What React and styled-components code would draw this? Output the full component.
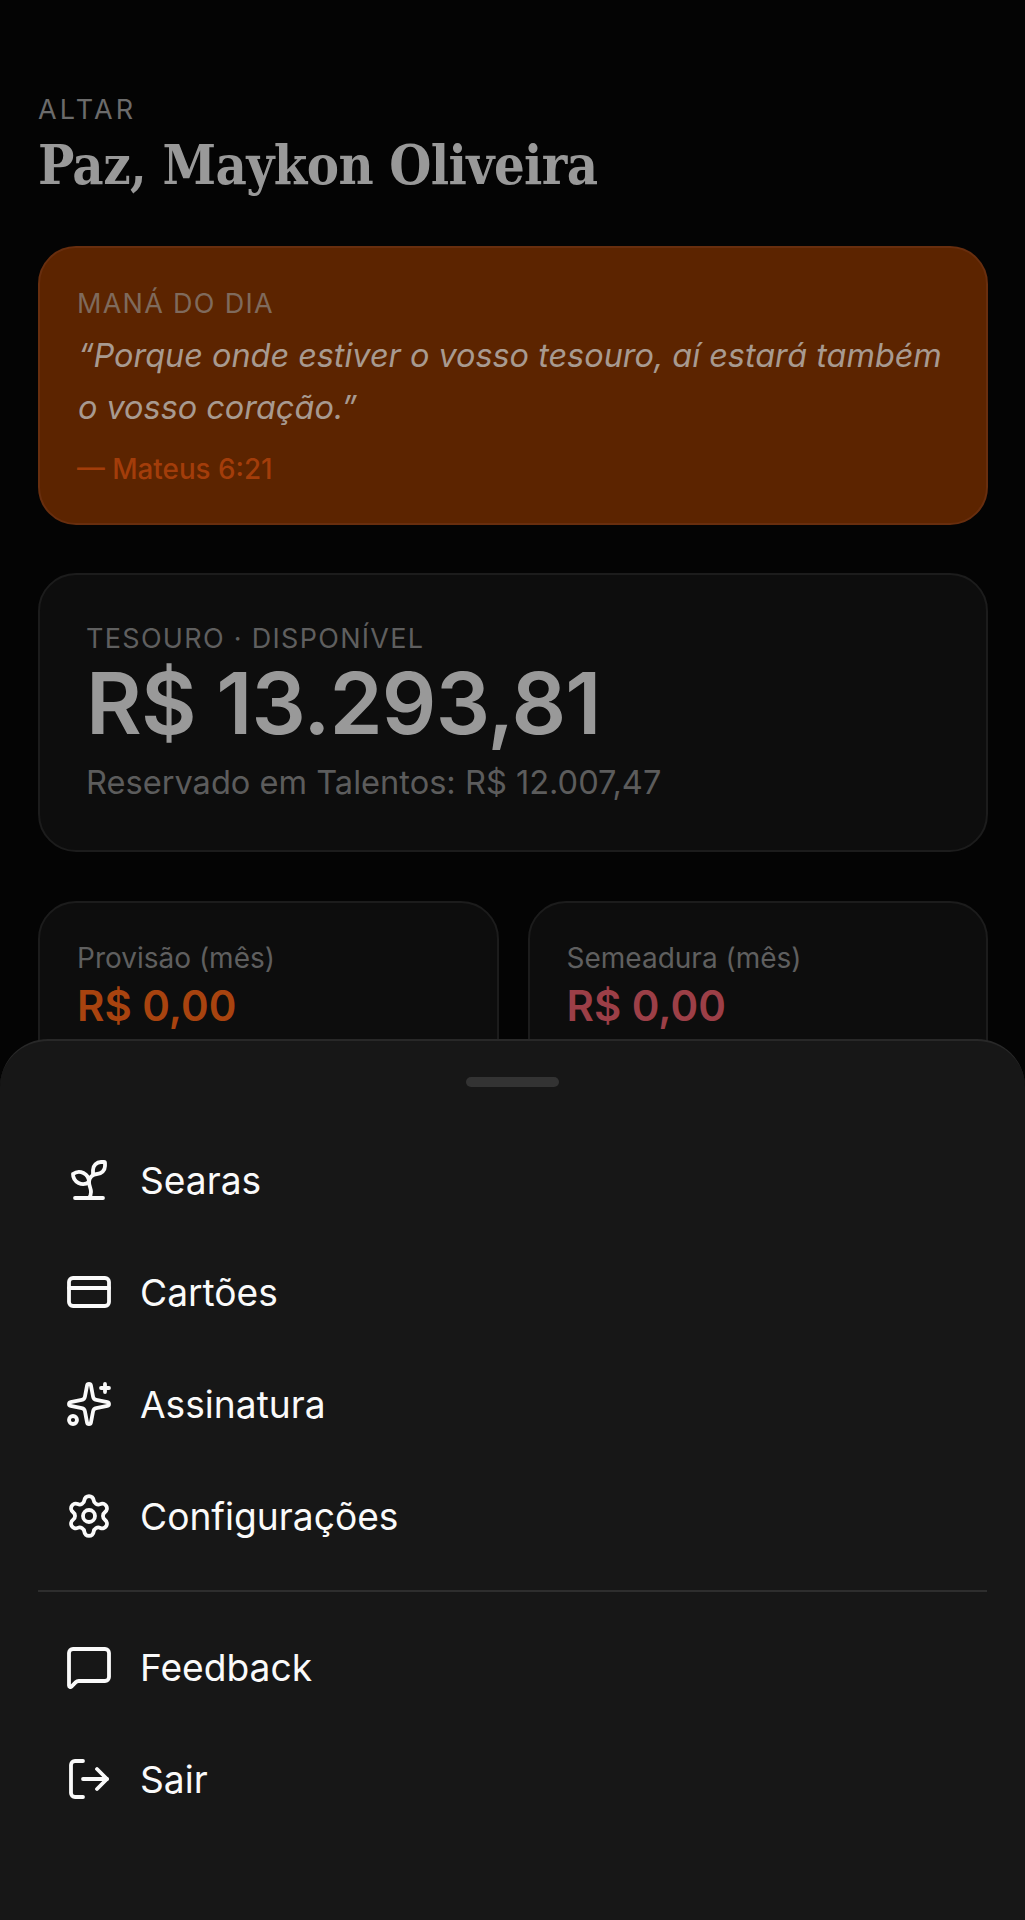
import React from "react";
import styled, { createGlobalStyle } from "styled-components";
import { Sprout, CreditCard, Sparkles, Settings, MessageSquare, LogOut } from "lucide-react";

const Global = createGlobalStyle`
  html, body { margin: 0; padding: 0; background: #050505; }
  body { font-family: Inter, "Noto Sans", sans-serif; }
  * { box-sizing: border-box; }
`;

const Page = styled.div`
  position: relative;
  width: 1025px;
  height: 1920px;
  overflow: hidden;
  background: #040404;
  padding: 94px 37px 0 38px;
`;
const Eyebrow = styled.div`
  font-size: 27px;
  line-height: 32px;
  letter-spacing: 3.2px;
  color: #6b6b6b;
`;
const Title = styled.h1`
  margin: 3px 0 0;
  font-family: "DejaVu Serif Condensed", "DejaVu Serif", serif;
  font-weight: 700;
  font-stretch: condensed;
  font-size: 53.8px;
  line-height: 72px;
  letter-spacing: -0.6px;
  color: #999999;
`;
const Verse = styled.section`
  margin-top: 45px;
  height: 279px;
  padding: 40px 37px 0;
  border-radius: 38px;
  background: #5c2400;
  border: 2px solid #682e0e;
`;
const VerseLabel = styled.div`
  font-size: 27px;
  line-height: 32px;
  letter-spacing: 1.3px;
  color: #7f6a5c;
`;
const Quote = styled.p`
  margin: 10px 0 0 1px;
  font-size: 32.4px;
  line-height: 52px;
  font-style: italic;
  color: #a89a90;
`;
const Ref = styled.div`
  margin-top: 19px;
  font-size: 27.8px;
  line-height: 32px;
  font-weight: 500;
  color: #a33d0a;
`;
const Treasure = styled.section`
  margin-top: 48px;
  height: 279px;
  padding: 48px 46px 0;
  border-radius: 38px;
  background: #0d0d0d;
  border: 2px solid #1c1c1c;
`;
const TreasureLabel = styled.div`
  font-size: 27px;
  line-height: 32px;
  letter-spacing: 1.3px;
  color: #5f5f5f;
`;
const Amount = styled.div`
  margin-top: 3px;
  font-size: 85.5px;
  line-height: 90px;
  font-weight: 600;
  letter-spacing: -0.9px;
  color: #999999;
`;
const Reserved = styled.div`
  margin-top: 14px;
  font-size: 32.6px;
  line-height: 40px;
  color: #5c5c5c;
`;
const Stats = styled.div`
  margin-top: 49px;
  display: grid;
  grid-template-columns: 1fr 1fr;
  gap: 29px;
`;
const Stat = styled.div`
  height: 240px;
  padding: 39px 37px 0;
  border-radius: 38px;
  background: #0d0d0d;
  border: 2px solid #1c1c1c;
`;
const StatLabel = styled.div`
  font-size: 28px;
  line-height: 32px;
  color: #5f5f5f;
`;
const StatValue = styled.div`
  margin-top: 6px;
  font-size: 42px;
  line-height: 52px;
  font-weight: 600;
  color: ${(p) => p.$color};
`;
const Sheet = styled.aside`
  position: absolute;
  left: 0;
  right: 0;
  top: 1039px;
  bottom: 0;
  padding: 36px 38px 0;
  background: #171717;
  border-top: 2px solid #282828;
  border-radius: 48px 48px 0 0;
`;
const Handle = styled.div`
  width: 93px;
  height: 10px;
  margin: 0 auto 37px;
  border-radius: 5px;
  background: #333333;
`;
const Row = styled.div`
  display: flex;
  align-items: center;
  gap: 27px;
  height: 112px;
  padding-left: 27px;
  font-size: 37.15px;
  color: #fafafa;
`;
const Divider = styled.hr`
  margin: 18px 0 19px;
  border: 0;
  height: 2px;
  background: #2e2e2e;
`;

const items = [
  ["Searas", Sprout],
  ["Cartões", CreditCard],
  ["Assinatura", Sparkles],
  ["Configurações", Settings],
];
const items2 = [
  ["Feedback", MessageSquare],
  ["Sair", LogOut],
];

const MenuRow = ({ label, Icon }) => (
  <Row>
    <Icon size={48} strokeWidth={1.9} />
    <span>{label}</span>
  </Row>
);

export default function App() {
  return (
    <Page>
      <Global />
      <Eyebrow>ALTAR</Eyebrow>
      <Title>Paz, Maykon Oliveira</Title>
      <Verse>
        <VerseLabel>MANÁ DO DIA</VerseLabel>
        <Quote>“Porque onde estiver o vosso tesouro, aí estará também o vosso coração.”</Quote>
        <Ref>— Mateus 6:21</Ref>
      </Verse>
      <Treasure>
        <TreasureLabel>TESOURO · DISPONÍVEL</TreasureLabel>
        <Amount>R$ 13.293,81</Amount>
        <Reserved>Reservado em Talentos: R$ 12.007,47</Reserved>
      </Treasure>
      <Stats>
        <Stat>
          <StatLabel>Provisão (mês)</StatLabel>
          <StatValue $color="#a8430f">R$ 0,00</StatValue>
        </Stat>
        <Stat>
          <StatLabel>Semeadura (mês)</StatLabel>
          <StatValue $color="#9c3f47">R$ 0,00</StatValue>
        </Stat>
      </Stats>
      <Sheet>
        <Handle />
        {items.map(([l, I]) => <MenuRow key={l} label={l} Icon={I} />)}
        <Divider />
        {items2.map(([l, I]) => <MenuRow key={l} label={l} Icon={I} />)}
      </Sheet>
    </Page>
  );
}
